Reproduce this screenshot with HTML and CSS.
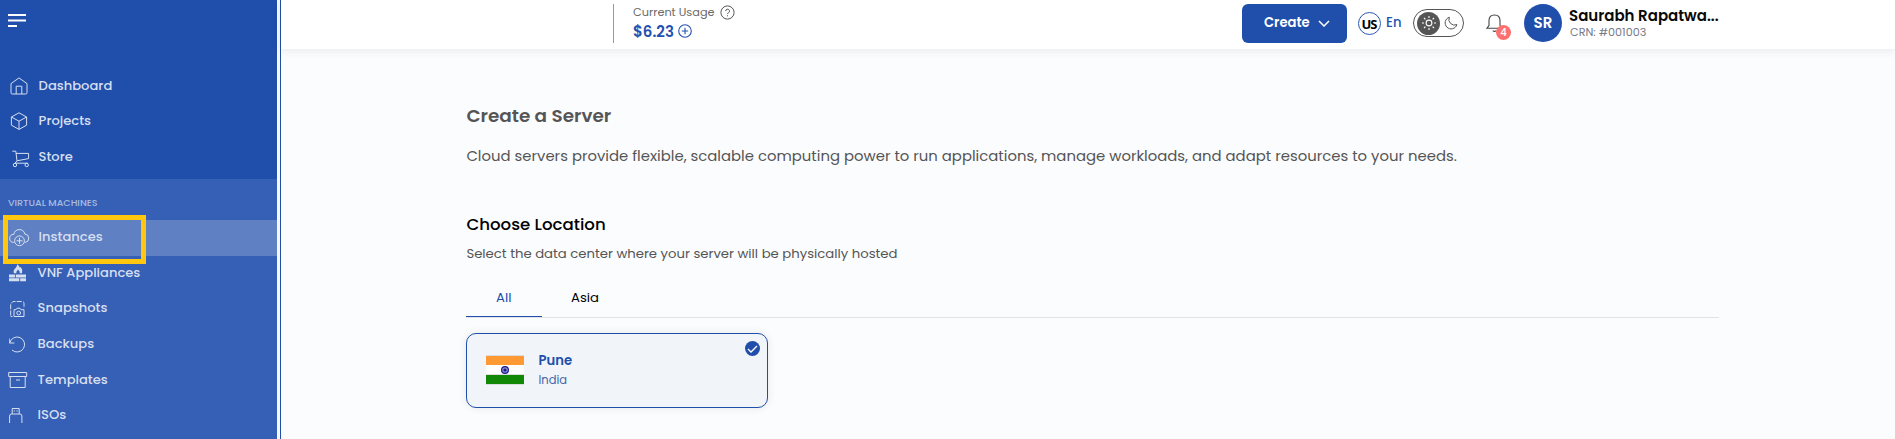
FILE: index.html
```
<!DOCTYPE html>
<html lang="en">
<head>
<meta charset="utf-8">
<title>Create a Server</title>
<link rel="stylesheet" href="styles.css">
</head>
<body>
<div class="app">
  <aside class="sidebar">
    <div class="brand">
      <svg class="burger" width="19" height="13" viewBox="0 0 19 13"><path d="M0 1h18M0 6.5h18M0 12h9" stroke="#fff" stroke-width="2"/></svg>
    </div>
    <nav class="nav">
      <a class="item dash"><svg width="18" height="18" viewBox="0 0 18 18"><path d="M1 6.600 9 .9l8 5.700v9.200q0 1.200-1.200 1.200H2.200Q1 17 1 15.800zM6.200 17V9.200h5.600V17"/></svg><span>Dashboard</span></a>
      <a class="item proj"><svg width="18" height="18" viewBox="0 0 18 18"><path d="M9 .8 16.600 5v8.200L9 17.400 1.400 13.200V5zM1.400 5 9 9.200 16.600 5M9 9.200v8.200"/></svg><span>Projects</span></a>
      <a class="item store"><svg width="18" height="18" viewBox="0 0 18 18"><path d="M.3 1.200h3.500l1.200 9.600L3 13.200h13M4 3.400h12.600v5.200L5 10.800"/><circle cx="3" cy="15" r="1.700"/><circle cx="14.700" cy="15" r="1.700"/></svg><span>Store</span></a>
    </nav>
    <nav class="nav vm">
      <h2 class="group">VIRTUAL MACHINES</h2>
      <a class="item active"><svg class="cloud" width="21" height="19" viewBox="0 0 21 19"><path d="M5.500 14.400H4.600A4 4 0 0 1 4.800 6.400 5.600 5.600 0 0 1 15.800 6a4.250 4.250 0 0 1 .6 8.400h-.9"/><circle cx="10.500" cy="12.800" r="4.900"/><path d="M10.500 9.800v6M7.500 12.800h6"/></svg><span>Instances</span></a>
      <a class="item"><svg width="18" height="18" viewBox="0 0 18 18"><g class="solid"><path d="M5 9.200C3.800 6.600 5.800 5 7.200 3.300Q8.400 1.800 8 .2q2.400 1.200 2.800 3.600l1-.9Q14.200 6 13 9.200h-2.200Q11 7.200 9 5.600 7 7.600 7.300 9.200z"/><path d="M0 10.400h5.900v3H0zM6.800 10.400H17v3H6.800zM0 14.300h10.300v3H0zM11.200 14.300H17v3h-5.800z"/></g></svg><span>VNF Appliances</span></a>
      <a class="item"><svg width="18" height="18" viewBox="0 0 18 18"><path d="M1.700 15.500V4L4 1.500h9q2 0 2 2V8" stroke-dasharray="5 1.200"/><path d="M5 9.700h2l1-1.500h3l1 1.500h3v6.800H5z"/><circle cx="9.700" cy="13" r="1.900"/><path d="M1.700 16.500h1.800"/></svg><span>Snapshots</span></a>
      <a class="item"><svg width="18" height="18" viewBox="0 0 18 18"><path d="M.3 2.600V7h5M.8 6.800A7.500 7.500 0 1 1 3 14"/></svg><span>Backups</span></a>
      <a class="item"><svg class="wide" width="20" height="18" viewBox="0 0 20 18"><path d="M.7 1.500h18v4h-18zM2.200 5.500v11h15v-11M8 9h4"/></svg><span>Templates</span></a>
      <a class="item"><svg width="18" height="18" viewBox="0 0 18 18"><path d="M3.200 7V1.500h7V7M.6 16V9q0-2 2-2h8.300q2 0 2 2v7M5.300 3.300v1.200M8.100 3.300v1.200"/></svg><span>ISOs</span></a>
      <div class="highlight"></div>
    </nav>
  </aside>
  <div class="main">
    <header class="topbar">
      <div class="usage">
        <div class="usage-label"><span>Current Usage</span>
          <svg width="15" height="15" viewBox="0 0 15 15"><circle cx="7.500" cy="7.500" r="6.600"/><path d="M5.700 6.100a1.900 1.900 0 1 1 2.700 1.700q-.9.400-.9 1.300M7.500 10.300v1"/></svg></div>
        <div class="usage-value"><span>$6.23</span>
          <svg width="14" height="14" viewBox="0 0 14 14"><circle cx="7" cy="7" r="6.300"/><path d="M7 3.800v6.400M3.800 7h6.400"/></svg></div>
      </div>
      <button class="create"><span>Create</span><svg width="12" height="7" viewBox="0 0 12 7"><path d="m1 1 5 5 5-5"/></svg></button>
      <div class="lang"><span class="flag-us">US</span><span class="code">En</span></div>
      <div class="theme">
        <span class="sun"><svg width="16" height="16" viewBox="0 0 16 16"><circle cx="8" cy="8" r="2.900"/><path d="M8 1v2M8 13v2M1 8h2M13 8h2M3 3l1.400 1.400M11.600 11.600 13 13M13 3l-1.400 1.400M4.400 11.600 3 13"/></svg></span>
        <svg class="moon" width="14" height="14" viewBox="0 0 14 14"><path d="M5.300 1.200A6 6 0 1 0 12.900 8.600 5.700 5.700 0 0 1 5.300 1.200z"/></svg>
      </div>
      <div class="bell">
        <svg width="17" height="19" viewBox="0 0 17 19"><path d="M1 14.200h15L14 11.600V6.800Q14 1 8.500 1T3 6.800v4.800zM6.800 16.600q1.700 1.600 3.400 0"/></svg>
        <span class="badge">4</span>
      </div>
      <div class="avatar">SR</div>
      <div class="who"><div class="name">Saurabh Rapatwa...</div><div class="crn">CRN: #001003</div></div>
    </header>
    <main class="content">
      <h1>Create a Server</h1>
      <p class="lead">Cloud servers provide flexible, scalable computing power to run applications, manage workloads, and adapt resources to your needs.</p>
      <h3>Choose Location</h3>
      <p class="hint">Select the data center where your server will be physically hosted</p>
      <div class="tabs"><a class="tab on">All</a><a class="tab">Asia</a></div>
      <div class="card">
        <svg class="flag" width="38" height="30" viewBox="0 0 38 30"><path fill="#ddd" d="M0 0h38v30H0z"/><path fill="#f93" d="M0 1h38v9H0z"/><path fill="#fff" d="M0 10h38v9H0z"/><path fill="#128807" d="M0 20h38v9H0z"/><circle cx="19" cy="15" r="3.400" fill="#8f8fd0" stroke="#1a1a8c" stroke-width="1.200"/><circle cx="19" cy="15" r="1.600" fill="#1a1a8c"/></svg>
        <div class="place"><div class="city">Pune</div><div class="country">India</div></div>
        <svg class="check" width="15" height="15" viewBox="0 0 15 15"><circle cx="7.500" cy="7.500" r="7.500" fill="#204fab"/><path d="m3 8 3 2.900L12 4.900" fill="none" stroke="#fff" stroke-width="1.400"/></svg>
      </div>
    </main>
  </div>
</div>
</body>
</html>
```
FILE: styles.css
```
* { box-sizing: border-box; }
body {
  margin: 0;
  height: 439px;
  overflow: hidden;
  font-family: Poppins, Inter, sans-serif;
  background: #fbfcfe;
}
h1, h2, h3, p { margin: 0; }
.app { display: flex; height: 439px; }

/* Sidebar */
.sidebar {
  flex: none;
  width: 281px;
  border-right: 1px solid #204fab;
  background: linear-gradient(90deg, #204fab 277px, #f6f8fc 277px);
}
.brand { height: 67px; padding: 14px 0 0 8px; }
.burger { display: block; }
.nav { width: 277px; color: #d6dff1; }
.item {
  display: flex;
  align-items: center;
  height: 35.6px;
  padding-left: 9px;
  font-size: 13.1px;
  font-weight: 500;
  line-height: 20px;
}
.item svg {
  flex: none;
  margin-right: 10.6px;
  fill: none;
  stroke: #d6dff1;
  stroke-width: 1;
}
.item span { padding-bottom: 1px; }
.item .solid { fill: #d6dff1; stroke: none; }
.nav .dash, .nav .proj, .nav .store { padding-left: 10px; }
.nav .dash { height: 36px; padding-top: 2px; }
.nav .proj { height: 36px; }
.nav .store { height: 36px; padding-left: 12px; }
.store svg { margin-right: 8.6px; margin-top: 3px; }
.nav .store span { padding-bottom: 0; }
.item .wide { margin: 0 9.6px 0 -1px; }
.brand + .nav { height: 112px; }
.vm {
  position: relative;
  height: 260px;
  background: #3660b5;
}
.group {
  height: 41px;
  padding: 17px 0 0 8px;
  font-size: 9.5px;
  font-weight: 500;
  line-height: 14px;
  color: #a9bce1;
}
.active { background: #5f80c2; }
.item .cloud { margin: 0 8.6px 0 0; }
.highlight {
  position: absolute;
  left: 3px;
  top: 36px;
  width: 143px;
  height: 49px;
  border: 5px solid #ffc80e;
}

/* Top bar */
.main { flex: 1; min-width: 0; }
.topbar {
  display: flex;
  align-items: flex-start;
  height: 49px;
  padding: 4px 0 0 332px;
  background: #fff;
  box-shadow: 0 2px 8px rgba(40, 50, 70, .09);
}
.usage {
  width: 629px;
  height: 39px;
  padding-left: 19px;
  border-left: 1px solid #999;
}
.usage svg { fill: none; }
.usage-label {
  display: flex;
  align-items: center;
  gap: 5px;
  height: 16px;
  font-size: 11.3px;
  color: #6a6a6a;
}
.usage-label svg { stroke: #555; }
.usage-value {
  display: flex;
  align-items: center;
  gap: 4px;
  height: 22px;
  font-size: 15px;
  font-weight: 600;
  color: #2450b0;
}
.usage-value svg { stroke: #2450b0; stroke-width: 1.1; }
.create {
  display: flex;
  align-items: center;
  gap: 8px;
  width: 105px;
  height: 39px;
  padding: 0 0 1px 22px;
  border: 0;
  border-radius: 6px;
  background: #204fab;
  color: #fff;
  font: 600 13.15px Poppins, Inter, sans-serif;
}
.create svg { fill: none; stroke: #fff; stroke-width: 1.5; }
.lang {
  display: flex;
  align-items: center;
  gap: 5px;
  width: 66px;
  height: 38px;
  padding-left: 11px;
}
.flag-us {
  width: 23px;
  height: 23px;
  border: 1px solid #2a58b4;
  border-radius: 50%;
  color: #000;
  text-align: center;
  font: 700 13px/22px "Noto Sans", sans-serif;
  letter-spacing: -1px;
  text-indent: -1px;
}
.code { font-size: 13.2px; font-weight: 500; color: #2553b0; }
.theme {
  display: flex;
  align-items: center;
  justify-content: space-between;
  width: 51px;
  height: 28px;
  margin-top: 5px;
  padding: 0 5px 0 3px;
  border: 1px solid #555;
  border-radius: 14px;
}
.sun {
  display: grid;
  place-items: center;
  width: 23px;
  height: 23px;
  border-radius: 50%;
  background: #555;
}
.sun svg { fill: none; stroke: #fff; stroke-width: 1.1; }
.moon { fill: none; stroke: #555; }
.bell { position: relative; margin: 10px 21px 0 22px; width: 17px; height: 19px; }
.bell svg { display: block; fill: none; stroke: #444; stroke-width: 1.1; }
.badge {
  position: absolute;
  left: 10px;
  top: 11px;
  width: 15px;
  height: 15px;
  border-radius: 50%;
  background: #fc7070;
  color: #fff;
  font-size: 10px;
  font-weight: 500;
  line-height: 15px;
  text-align: center;
}
.avatar {
  width: 38px;
  height: 38px;
  border-radius: 50%;
  background: #204fab;
  color: #fff;
  font-size: 15px;
  font-weight: 600;
  line-height: 38px;
  text-align: center;
}
.who { padding-left: 7px; }
.name { font-size: 15px; font-weight: 600; line-height: 24px; color: #0a0a0a; }
.crn { padding-left: 1px; font-size: 11.2px; line-height: 9px; color: #777b88; }

/* Content */
.content { width: 1438px; padding: 54px 0 0 185px; }
h1 {
  padding-left: .4px;
  font-size: 18.4px;
  font-weight: 600;
  line-height: 26px;
  color: #555;
}
.lead {
  margin-top: 15px;
  padding-left: .4px;
  font-size: 14.86px;
  line-height: 24px;
  color: #555;
  white-space: nowrap;
}
h3 {
  margin-top: 45px;
  padding-left: .4px;
  font-size: 16.6px;
  font-weight: 500;
  line-height: 24px;
  color: #000;
}
.hint {
  margin-top: 7px;
  padding-left: .4px;
  font-size: 13.22px;
  line-height: 20px;
  color: #555;
}
.tabs {
  display: flex;
  height: 54px;
  padding-top: 14px;
  border-bottom: 1px solid #e2e3e6;
}
.tab {
  width: 76px;
  height: 39px;
  padding-left: 29px;
  font-size: 13.2px;
  line-height: 39px;
  color: #000;
}
.tab.on {
  padding-left: 30px;
  border-bottom: 1px solid #204fab;
  color: #204fab;
}
.card {
  position: relative;
  display: flex;
  align-items: center;
  width: 302px;
  height: 75px;
  margin-top: 15px;
  padding-left: 19px;
  border: 1px solid #204fab;
  border-radius: 10px;
  background: #f1f4f9;
  box-shadow: 0 0 8px rgba(0, 0, 0, .09);
}
.flag { flex: none; margin: 0 14.500px 1px 0; }
.place { padding-bottom: 2px; }
.city { font-size: 13.2px; font-weight: 600; line-height: 20px; color: #204fab; }
.country { font-size: 11.5px; line-height: 18px; color: #4565a8; }
.check { position: absolute; right: 7px; top: 7px; }
```
